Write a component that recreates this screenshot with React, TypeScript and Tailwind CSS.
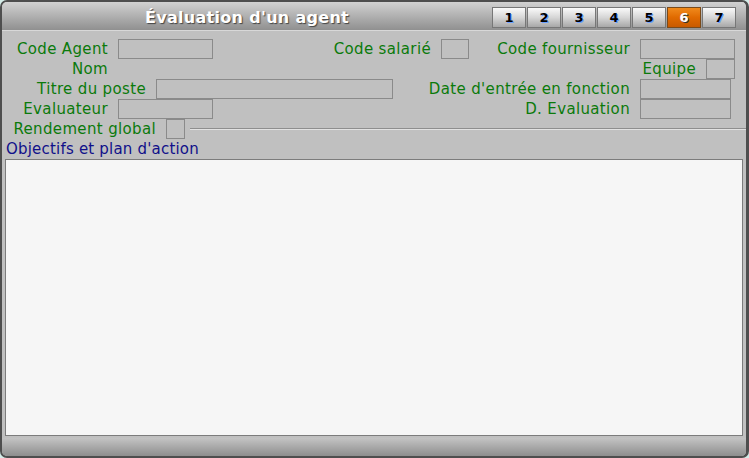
import React from 'react';

const font = { fontFamily: '"DejaVu Sans", Verdana, sans-serif' };

function Field({ w }: { w: string }) {
  return <div className={`h-[20px] shrink-0 border border-[#8a8a8a] bg-[#c0c0c0] ${w}`} />
}

function Label({ w, children }: { w: string; children: React.ReactNode }) {
  return (
    <div className={`shrink-0 whitespace-nowrap pr-[10px] text-right text-[15px] leading-[20px] tracking-[0.35px] text-[#0b7a0b] ${w}`}>
      {children}
    </div>
  )
}

const tabs = ['1', '2', '3', '4', '5', '6', '7']

export default function App() {
  return (
    <div className="h-[458px] w-[749px] bg-[#d4ece8]" style={font}>
      <div className="flex h-full w-full flex-col overflow-hidden rounded-[7px] border-t-2 border-b-2 border-l-2 border-r-[3px] border-[#4e4e4e] bg-[#c0c0c0]">
        {/* title bar */}
        <div className="relative flex h-[28px] shrink-0 items-center bg-gradient-to-b from-[#d2d2d2] to-[#909090]">
          <div className="w-[490px] pt-[3px] text-center text-[16px] font-bold tracking-[0.3px] text-white [text-shadow:1px_1px_1px_#444]">
            Évaluation d'un agent
          </div>
          <div className="flex gap-[1px] pt-[3px]">
            {tabs.map(t => (
              <div
                key={t}
                className={
                  t === '6'
                    ? 'flex h-[21px] w-[34px] items-center justify-center border border-[#7a4a1a] bg-gradient-to-b from-[#f08a1a] via-[#e06a00] to-[#c85a00] text-[13px] font-bold text-white [text-shadow:1px_1px_0_#333]'
                    : 'flex h-[21px] w-[34px] items-center justify-center border border-[#777] bg-gradient-to-b from-[#fafafa] via-[#d6d6d6] to-[#a8a8a8] text-[13px] font-bold text-black [text-shadow:1px_1px_0_#6aa0ff]'
                }
              >
                {t}
              </div>
            ))}
          </div>
        </div>
        <div className="h-[1px] shrink-0 bg-[#d8d8d8]" />

        {/* form */}
        <div className="flex flex-col pt-[8px]">
          <div className="flex h-[20px]">
            <Label w="w-[116px]">Code Agent</Label>
            <Field w="w-[95px]" />
            <Label w="w-[228px]">Code salarié</Label>
            <Field w="w-[28px]" />
            <Label w="w-[171px]">Code fournisseur</Label>
            <Field w="w-[95px]" />
          </div>
          <div className="flex h-[20px]">
            <Label w="w-[116px]">Nom</Label>
            <div className="w-[95px]" />
            <Label w="w-[493px]">Equipe</Label>
            <Field w="w-[29px]" />
          </div>
          <div className="flex h-[20px]">
            <Label w="w-[154px]">Titre du poste</Label>
            <Field w="w-[237px]" />
            <Label w="w-[247px]">Date d'entrée en fonction</Label>
            <Field w="w-[91px]" />
          </div>
          <div className="flex h-[20px]">
            <Label w="w-[116px]">Evaluateur</Label>
            <Field w="w-[95px]" />
            <Label w="w-[427px]">D. Evaluation</Label>
            <Field w="w-[91px]" />
          </div>
          <div className="flex h-[20px] items-center">
            <Label w="w-[164px]">Rendement global</Label>
            <Field w="w-[19px]" />
            <div className="ml-[5px] flex-1 border-t border-b border-t-[#8e8e8e] border-b-[#e2e2e2]" />
          </div>
        </div>

        <div className="pl-[4px] pt-[1px] text-[15px] leading-[19px] tracking-[0.2px] text-[#10108a]">Objectifs et plan d'action</div>

        <div className="mx-[3px] h-[277px] shrink-0 border border-[#7c7c7c] bg-[#f6f6f6]" />

        <div className="mt-[2px] flex-1 bg-gradient-to-b from-[#c4c4c4] to-[#8e8e8e]" />
      </div>
    </div>
  )
}
